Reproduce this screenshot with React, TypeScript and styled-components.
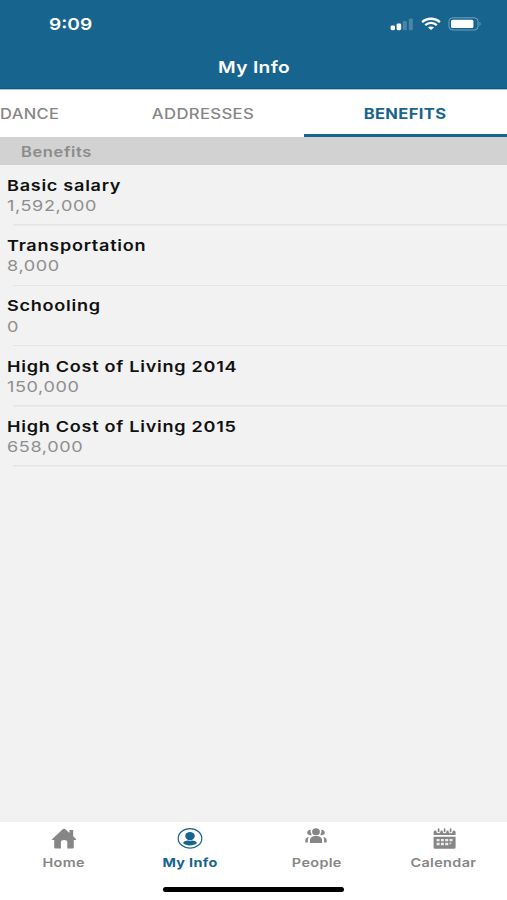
import React from 'react';
import styled, { createGlobalStyle } from 'styled-components';

const BLUE = '#17658f';
const GREY = '#868686';

const GlobalStyle = createGlobalStyle`
  * { box-sizing: border-box; }
  body { margin: 0; background: #f2f2f2; font-family: Inter, "Liberation Sans", sans-serif; }
`;

const Screen = styled.div`
  width: 507px;
  height: 900px;
  display: flex;
  flex-direction: column;
  overflow: hidden;
  background: #f2f2f2;
`;

type TextProps = { $size: number; $weight: number; $color: string; $wide?: number; $gap?: number; $center?: boolean };

const Text = styled.span<TextProps>`
  display: block;
  width: max-content;
  white-space: nowrap;
  font-size: ${p => p.$size}px;
  font-weight: ${p => p.$weight};
  color: ${p => p.$color};
  letter-spacing: ${p => p.$gap ?? 0.3}px;
  transform: scaleX(${p => p.$wide ?? 1.18});
  transform-origin: ${p => (p.$center ? 'center' : 'left center')};
`;

const Header = styled.header`
  height: 89px;
  flex: none;
  background: ${BLUE};
  border-bottom: 1px solid #105780;
`;

const StatusBar = styled.div`
  height: 48px;
  padding: 0 25px 0 49px;
  display: flex;
  align-items: center;
  justify-content: space-between;
`;

const StatusIcons = styled.div`
  display: flex;
  align-items: center;
  gap: 7px;
  svg { display: block; }
`;

const TitleBar = styled.div`
  height: 38px;
  display: flex;
  align-items: center;
  justify-content: center;
  padding-left: 1px;
`;

const Tabs = styled.nav`
  height: 48px;
  flex: none;
  display: grid;
  grid-template-columns: 101px 203px 203px;
  background: #fff;
  border-top: 1px solid #a9cadb;
`;

const Tab = styled.div<{ $active?: boolean; $start?: boolean }>`
  display: flex;
  align-items: center;
  justify-content: ${p => (p.$start ? 'flex-start' : 'center')};
  padding-top: ${p => (p.$active ? 2 : 0)}px;
  padding-bottom: ${p => (p.$active ? 0 : 1)}px;
  border-bottom: ${p => (p.$active ? `3px solid ${BLUE}` : 'none')};
`;

const SectionHeader = styled.div`
  height: 28px;
  flex: none;
  padding-left: 21px;
  display: flex;
  align-items: center;
  background: #d2d2d2;
`;

const List = styled.main`
  flex: 1;
  padding-top: 0.5px;
`;

const Row = styled.div`
  height: 60.25px;
  padding: 10.4px 0 0 7px;
  background: linear-gradient(#e4e4e4, #e4e4e4) 13px 100% / 100% 1.5px no-repeat;
  ${Text} { line-height: 20.2px; }
`;

const BottomBar = styled.footer`
  height: 78px;
  flex: none;
  background: #fff;
  display: flex;
  flex-direction: column;
  align-items: center;
`;

const NavItems = styled.div`
  width: 100%;
  height: 64.5px;
  display: grid;
  grid-template-columns: repeat(4, 1fr);
`;

const NavItem = styled.div`
  padding: 5px 0 0 0.5px;
  display: flex;
  flex-direction: column;
  align-items: center;
  svg { display: block; height: 24px; }
  ${Text} { line-height: 16px; margin-top: 4px; }
`;

const HomeIndicator = styled.div`
  width: 181px;
  height: 5.5px;
  border-radius: 3px;
  background: #000;
`;

const Signal = () => (
  <svg width="24" height="14" viewBox="0 0 24 14" fill="#fff">
    <rect x="0.6" y="8.4" width="4.4" height="4.8" rx="1.4" />
    <rect x="6.6" y="6.4" width="4.6" height="6.8" rx="1.4" />
    <rect x="12.8" y="4" width="4" height="9.2" rx="1.2" opacity="0.22" />
    <rect x="18.8" y="1.5" width="4" height="11.7" rx="1.2" opacity="0.22" />
  </svg>
);

const Wifi = () => (
  <svg width="20" height="14" viewBox="0 0 20 14" fill="none" stroke="#fff" strokeWidth="2.3">
    <path d="M1.1 5.1C6 0.6 14 0.6 18.9 5.1" />
    <path d="M4.2 8.1C7.5 5.1 12.5 5.1 15.8 8.1" />
    <path d="M7 10.5C8.8 9.2 11.2 9.2 13 10.5L10 13Z" fill="#fff" stroke="none" />
  </svg>
);

const Battery = () => (
  <svg width="34" height="14" viewBox="0 0 34 14">
    <rect x="1" y="0.8" width="29" height="12.2" rx="3.6" fill="none" stroke="#fff" strokeOpacity="0.38" />
    <rect x="3" y="2.7" width="22.4" height="8.4" rx="1.6" fill="#fff" />
    <path d="M31.5 4.7q2.2 2.2 0 4.4z" fill="#fff" opacity="0.4" />
  </svg>
);

const HomeIcon = () => (
  <svg width="26" viewBox="0 0 26 24" fill={GREY}>
    <path d="M1.1 12.2L12 2.1q1-.9 2 0L18.5 6V3h3.7v6.2l2.8 2.7q.5.8-.5 1H22.8v7.3q0 1.3-1.3 1.3H16.3v-6.2q0-2.2-3.2-2.2t-3.2 2.2v6.2H4.5q-1.3 0-1.3-1.3v-7.3H1.6q-1 0-.5-.7z" />
  </svg>
);

const ProfileIcon = () => (
  <svg width="26" viewBox="0 0 26 24" fill={BLUE}>
    <ellipse cx="13" cy="11.4" rx="11.8" ry="9.8" fill="none" stroke={BLUE} strokeWidth="1.2" />
    <ellipse cx="13" cy="9.1" rx="4.8" ry="4.1" />
    <path d="M6.2 16.3c0-1.8 2.4-2.8 5-2.8q1.8.9 3.6 0c2.6 0 5 1 5 2.8-1.3 1.4-4 2.1-6.8 2.1s-5.5-.7-6.8-2.1z" />
  </svg>
);

const PeopleIcon = () => (
  <svg width="26" viewBox="0 0 26 24" fill={GREY}>
    <ellipse cx="12" cy="4.8" rx="3.9" ry="3.5" />
    <path d="M6.7 2.8a6 6 0 0 0 1 5.2A3.3 2.7 0 1 1 6.7 2.8zM17.3 2.8a6 6 0 0 1-1 5.2A3.3 2.7 0 1 0 17.3 2.8z" />
    <path d="M6 15.9v-2.3c0-3.3 2.6-4.5 6-4.5s6 1.2 6 4.5v2.3z" />
    <path d="M1.3 15.5v-1.8c0-2.2 1.1-3.5 3.3-3.8-.7 1.6-.8 3.5-.7 5.6zM22.7 15.5v-1.8c0-2.2-1.1-3.5-3.3-3.8.7 1.6.8 3.5.7 5.6z" />
  </svg>
);

const CalendarIcon = () => (
  <svg width="24" viewBox="-0.6 0 24 24">
    <path fill={GREY} d="M1 8V5q0-1.6 1.6-1.6h.8Q3.8 6.2 6 6.2q2 0 2.1-2.8h1.7Q10 6.2 12 6.2t2.2-2.8h1.6q.1 2.8 2.2 2.8t2.5-2.8h.8Q23 3.4 23 5v3zM1 9.8h22v10.4q0 1.5-1.6 1.5H2.6Q1 21.7 1 20.2z" />
    <path stroke={GREY} strokeWidth="1.7" strokeLinecap="round" d="M6 2v2.4M12 2v2.4M18 2v2.4" />
    <path fill="#fff" fillOpacity="0.85" d="M4 11.9h3v2.4H4zM8.3 11.9h3v2.4h-3zM12.6 11.9h3v2.4h-3zM16.9 11.9h3v2.4h-3zM4 15.8h3v2.4H4zM8.3 15.8h3v2.4h-3zM12.6 15.8h3v2.4h-3zM16.9 15.8h2.4l-2.4 2z" />
  </svg>
);

const benefits = [
  { name: 'Basic salary', value: '1,592,000' },
  { name: 'Transportation', value: '8,000' },
  { name: 'Schooling', value: '0' },
  { name: 'High Cost of Living 2014', value: '150,000' },
  { name: 'High Cost of Living 2015', value: '658,000' },
];

const navigation = [
  { label: 'Home', Icon: HomeIcon, active: false },
  { label: 'My Info', Icon: ProfileIcon, active: true },
  { label: 'People', Icon: PeopleIcon, active: false },
  { label: 'Calendar', Icon: CalendarIcon, active: false },
];

export default function App() {
  return (
    <Screen>
      <GlobalStyle />
      <Header>
        <StatusBar>
          <Text $size={16.5} $weight={600} $color="#fff" $gap={0} $wide={1.16}>9:09</Text>
          <StatusIcons>
            <Signal />
            <Wifi />
            <Battery />
          </StatusIcons>
        </StatusBar>
        <TitleBar>
          <Text $size={16.5} $weight={600} $color="#fff" $wide={1.16} $center>My Info</Text>
        </TitleBar>
      </Header>
      <Tabs>
        <Tab $start><Text $size={14} $weight={550} $color={GREY}>DANCE</Text></Tab>
        <Tab><Text $size={14} $weight={550} $color={GREY} $wide={1.19} $center>ADDRESSES</Text></Tab>
        <Tab $active><Text $size={14} $weight={650} $color={BLUE} $center>BENEFITS</Text></Tab>
      </Tabs>
      <SectionHeader>
        <Text $size={14} $weight={600} $color="#8b8b8b" $gap={0.5}>Benefits</Text>
      </SectionHeader>
      <List>
        {benefits.map(item => (
          <Row key={item.name}>
            <Text $size={15} $weight={600} $color="#111" $gap={0.6} $wide={1.205}>{item.name}</Text>
            <Text $size={15} $weight={400} $color="#8e8e8e" $gap={0.5} $wide={1.205}>{item.value}</Text>
          </Row>
        ))}
      </List>
      <BottomBar>
        <NavItems>
          {navigation.map(({ label, Icon, active }) => (
            <NavItem key={label}>
              <Icon />
              <Text $size={12} $weight={active ? 700 : 600} $color={active ? BLUE : GREY} $wide={1.2} $center>{label}</Text>
            </NavItem>
          ))}
        </NavItems>
        <HomeIndicator />
      </BottomBar>
    </Screen>
  );
}
